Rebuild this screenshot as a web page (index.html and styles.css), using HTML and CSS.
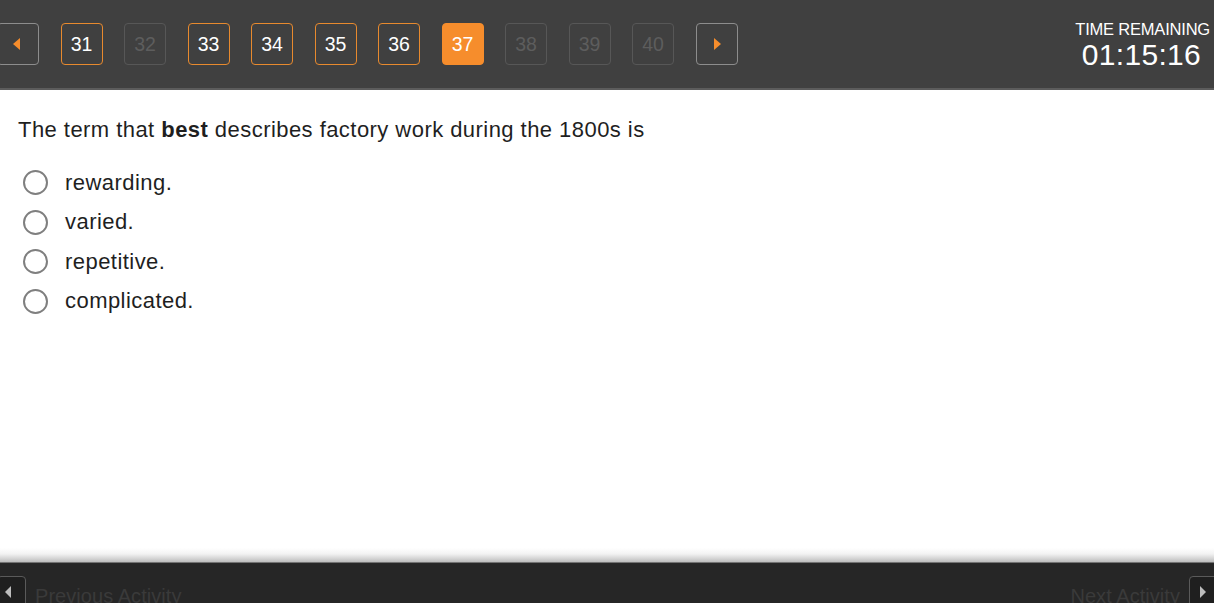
FILE: index.html
```html
<!DOCTYPE html>
<html>
<head>
<meta charset="utf-8">
<link rel="stylesheet" href="styles.css">
</head>
<body>
<div class="page">
  <header class="topbar">
    <nav class="pager">
      <div class="pbtn arrow arrow-left"><span class="tri tri-left"></span></div>
      <div class="pbtn done">31</div>
      <div class="pbtn off">32</div>
      <div class="pbtn done">33</div>
      <div class="pbtn done">34</div>
      <div class="pbtn done">35</div>
      <div class="pbtn done">36</div>
      <div class="pbtn current">37</div>
      <div class="pbtn off">38</div>
      <div class="pbtn off">39</div>
      <div class="pbtn off">40</div>
      <div class="pbtn arrow"><span class="tri tri-right"></span></div>
    </nav>
    <div class="timer">
      <div class="timer-label">TIME REMAINING</div>
      <div class="timer-value">01:15:16</div>
    </div>
  </header>
  <main class="content">
    <p class="question">The term that <b>best</b> describes factory work during the 1800s is</p>
    <ul class="options">
      <li class="option"><span class="radio"></span><span>rewarding.</span></li>
      <li class="option"><span class="radio"></span><span>varied.</span></li>
      <li class="option"><span class="radio"></span><span>repetitive.</span></li>
      <li class="option"><span class="radio"></span><span>complicated.</span></li>
    </ul>
  </main>
  <footer class="footbar">
    <div class="fnav">
      <div class="fbtn fbtn-left"><span class="ftri ftri-left"></span></div>
      <span class="flabel">Previous Activity</span>
    </div>
    <div class="fnav">
      <span class="flabel">Next Activity</span>
      <div class="fbtn fbtn-right"><span class="ftri ftri-right"></span></div>
    </div>
  </footer>
</div>
</body>
</html>
```
FILE: styles.css
```css
* { box-sizing: border-box; }
html, body { margin: 0; padding: 0; }
body {
  font-family: "Liberation Sans", Arial, Helvetica, sans-serif;
  background: #ffffff;
  color: #222;
  width: 1214px;
  height: 603px;
  overflow: hidden;
}
.page {
  display: flex;
  flex-direction: column;
  height: 603px;
}
.topbar {
  height: 90px;
  flex: 0 0 90px;
  background: #404040;
  border-bottom: 2px solid #5c5c5c;
  display: flex;
  justify-content: space-between;
  align-items: flex-start;
}
.pager {
  display: flex;
  gap: 21.5px;
  margin-top: 23px;
  margin-left: -3px;
}
.pbtn {
  width: 42px;
  height: 42px;
  border-radius: 4px;
  border: 1.5px solid #e88a2e;
  color: #ffffff;
  font-size: 19.5px;
  display: flex;
  align-items: center;
  justify-content: center;
}
.pbtn.off {
  border-color: #575757;
  color: #5d5d5d;
}
.pbtn.current {
  background: #f68d2c;
  border-color: #f68d2c;
  color: #fff;
}
.pbtn.arrow {
  border-color: #8d8d8d;
}
.tri {
  width: 0; height: 0;
  border-top: 6px solid transparent;
  border-bottom: 6px solid transparent;
}
.tri-left { border-right: 7px solid #f68d2c; margin-right: 4px; }
.tri-right { border-left: 7px solid #f68d2c; margin-left: 2px; }
.timer {
  margin-top: 20px;
  margin-right: 4px;
  display: flex;
  flex-direction: column;
  align-items: flex-end;
  color: #ffffff;
}
.timer-label {
  font-size: 16.5px;
  letter-spacing: -0.2px;
  line-height: 19px;
}
.timer-value {
  font-size: 30px;
  line-height: 32px;
  margin-right: 9px;
  letter-spacing: 0.3px;
}
.content {
  flex: 1;
  padding: 0 0 0 18px;
}
.question {
  margin: 28px 0 0 0;
  font-size: 22px;
  letter-spacing: 0.45px;
  line-height: 24px;
  color: #1f1f1f;
}
.question b { font-weight: bold; }
.options {
  list-style: none;
  margin: 21px 0 0 0;
  padding: 0;
  display: flex;
  flex-direction: column;
}
.option {
  display: flex;
  align-items: center;
  height: 39.5px;
  font-size: 22px;
  letter-spacing: 0.45px;
  color: #1f1f1f;
}
.radio {
  width: 25px;
  height: 25px;
  border-radius: 50%;
  border: 2px solid #7f7f7f;
  margin-left: 5px;
  margin-right: 17px;
  flex: 0 0 25px;
}
.footbar {
  flex: 0 0 55px;
  height: 55px;
  background: linear-gradient(to bottom, #ffffff 0px, #f2f2f2 6px, #bdbdbd 14px, #2a2a2a 15px, #262626 16px, #262626 100%);
  display: flex;
  justify-content: space-between;
  align-items: flex-start;
  padding-top: 28px;
}
.fnav {
  display: flex;
  align-items: flex-start;
  gap: 9px;
}
.fbtn {
  width: 29px;
  height: 40px;
  border: 1.5px solid #5a5a5a;
  border-radius: 4px;
  background: #1f1f1f;
  display: flex;
  align-items: flex-start;
  padding-top: 9px;
}
.fbtn-left { margin-left: -3px; justify-content: flex-end; padding-right: 14px; }
.fbtn-right { margin-right: -4px; justify-content: flex-start; padding-left: 10px; }
.ftri { width: 0; height: 0; border-top: 6px solid transparent; border-bottom: 6px solid transparent; }
.ftri-left { border-right: 6px solid #bdbdbd; }
.ftri-right { border-left: 6px solid #bdbdbd; }
.flabel {
  font-size: 20px;
  letter-spacing: 0.05px;
  color: #3a3a3a;
  margin-top: 9px;
  line-height: 22px;
}
```
